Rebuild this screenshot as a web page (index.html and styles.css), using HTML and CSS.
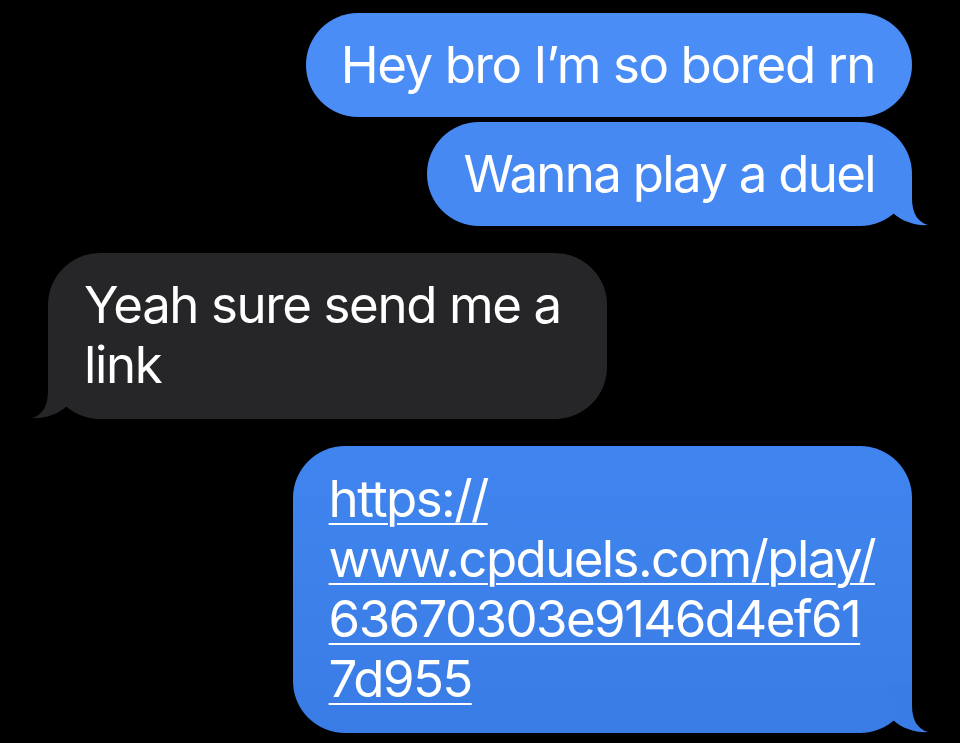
FILE: index.html
```html
<!DOCTYPE html>
<html lang="en">
<head>
<meta charset="utf-8">
<title>Messages</title>
<link rel="stylesheet" href="styles.css">
</head>
<body>
<div class="thread">
  <div class="msg sent first">
    <div class="bubble blue-a">Hey bro I’m so bored rn</div>
  </div>
  <div class="msg sent">
    <div class="bubble blue-b">Wanna play a duel<svg class="tail" viewBox="0 0 40 50" width="40" height="50"><path d="M24 0 L24 22 C24 38 30 46 40 49 C30 50 14 46 5 37 L0 0 Z"/></svg></div>
  </div>
  <div class="msg received">
    <div class="bubble gray">Yeah sure send me a<br>link<svg class="tail" viewBox="0 0 40 50" width="40" height="50"><path d="M24 0 L24 22 C24 38 30 46 40 49 C30 50 14 46 5 37 L0 0 Z"/></svg></div>
  </div>
  <div class="msg sent">
    <div class="bubble blue-c"><a class="link" href="#">https://<br>www.cpduels.com/play/<br>63670303e9146d4ef61<br>7d955</a><svg class="tail" viewBox="0 0 40 50" width="40" height="50"><path d="M24 0 L24 22 C24 38 30 46 40 49 C30 50 14 46 5 37 L0 0 Z"/></svg></div>
  </div>
</div>
</body>
</html>
```
FILE: styles.css
```css
html, body {
  margin: 0;
  padding: 0;
  background: #000;
}
body {
  width: 960px;
  height: 743px;
  overflow: hidden;
  font-family: Inter, "Liberation Sans", sans-serif;
  color: #fff;
}
.thread {
  display: flex;
  flex-direction: column;
  padding: 13px 48px 0;
}
.msg {
  display: flex;
}
.msg.sent {
  justify-content: flex-end;
  margin-top: 5px;
}
.msg.sent.first {
  margin-top: 0;
}
.msg.received {
  justify-content: flex-start;
  margin-top: 27px;
}
.msg.received + .msg.sent {
  margin-top: 27px;
}
.bubble {
  position: relative;
  font-size: 51px;
  line-height: 60px;
  letter-spacing: -1.4px;
  padding: 22px 37px 22px 36px;
  border-radius: 52px;
  white-space: nowrap;
}
.blue-a { background: #4a8df6; padding-left: 35px; }
.blue-b { background: #4689f3; letter-spacing: -1.7px; }
.blue-b .tail { fill: #4689f3; }
.blue-c {
  background: linear-gradient(#4085ef, #3a7ce6);
  padding-top: 23px;
  padding-bottom: 24px;
  letter-spacing: -1.6px;
}
.blue-c .tail { fill: #3a7ce6; }
.gray {
  background: #262628;
  padding-right: 46px;
  padding-bottom: 24px;
}
.gray .tail { fill: #262628; }
.tail {
  position: absolute;
  bottom: 0;
  right: -16px;
  display: block;
}
.received .tail {
  right: auto;
  left: -16px;
  transform: scaleX(-1);
}
.link {
  color: #fff;
  text-decoration: underline;
  text-decoration-thickness: 2px;
  text-underline-offset: 6px;
}
```
